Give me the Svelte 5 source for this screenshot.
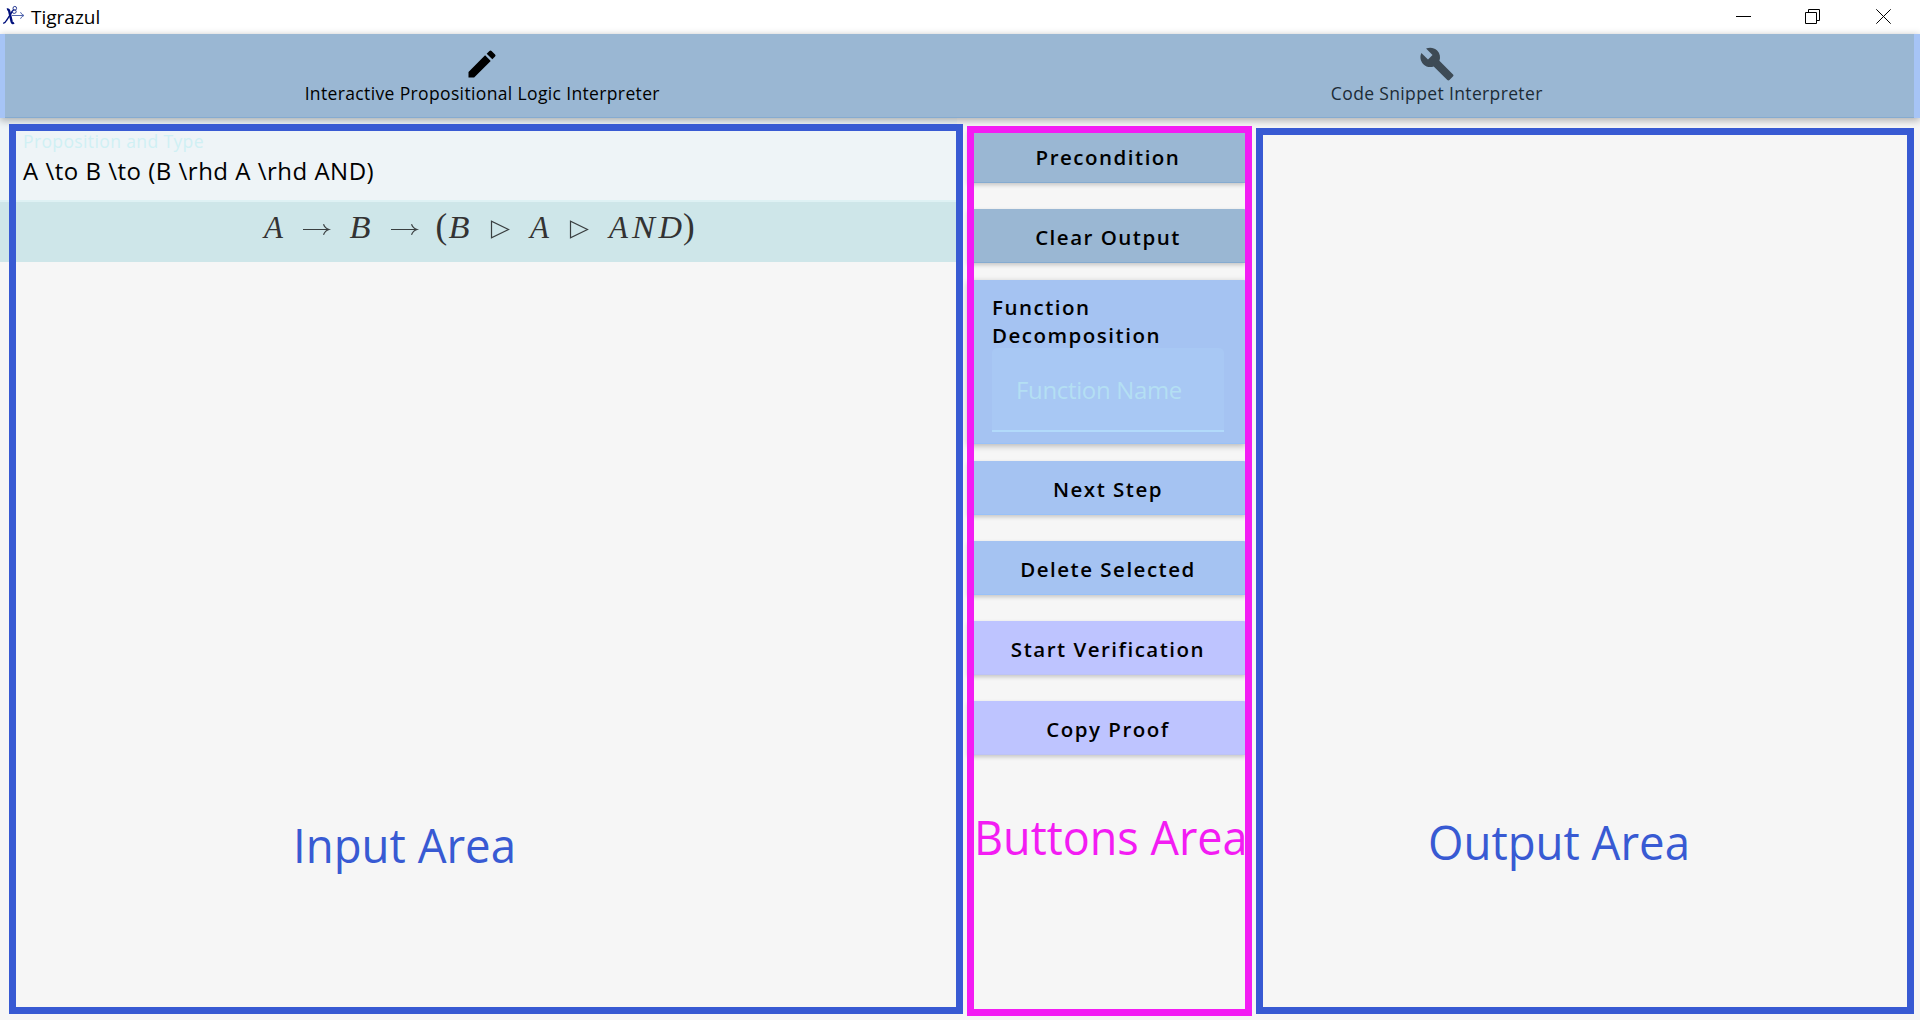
<script>
  const tabs = [
    {
      label: 'Interactive Propositional Logic Interpreter',
      active: true,
      icon: 'M3 17.25V21h3.75L17.81 9.94l-3.75-3.75L3 17.25zM20.71 7.04a1 1 0 0 0 0-1.41l-2.34-2.34a1 1 0 0 0-1.41 0l-1.83 1.83 3.75 3.75 1.83-1.83z',
    },
    {
      label: 'Code Snippet Interpreter',
      active: false,
      icon: 'M22.7 19l-9.1-9.1c.9-2.3.4-5-1.5-6.9-2-2-5-2.4-7.4-1.3L9 6 6 9 1.6 4.7C.4 7.1.9 10.1 2.9 12.1c1.9 1.9 4.6 2.4 6.9 1.5l9.1 9.1c.4.4 1 .4 1.4 0l2.3-2.3c.5-.4.5-1.1.1-1.4z',
    },
  ];
  const outputActions = ['Precondition', 'Clear Output'];
  const stepActions = ['Next Step', 'Delete Selected'];
  const proofActions = ['Start Verification', 'Copy Proof'];
</script>

<div class="window">
  <div class="titlebar">
    <svg class="logo" width="28" height="34" viewBox="0 0 28 34">
      <g class="cross">
        <path class="thick" d="M7 9.5Q8.6 9 9.2 11L11.6 21.5Q12.2 23.8 14 22.8" />
        <path class="thin" d="M14 9.8Q12.6 10 10.8 14L6.4 20.5Q4.8 23.6 3.2 22.8" />
      </g>
      <g class="loops">
        <ellipse cx="14.8" cy="8.3" rx="1.8" ry="1.9" />
        <ellipse cx="14.2" cy="11.6" rx="2" ry="1.8" />
      </g>
      <path class="arrow" d="M12 15.5H23.5M20.5 12.2Q21.5 14.8 24 15.5Q21.5 16.2 20.5 18.8" />
    </svg>
    <span class="title">Tigrazul</span>
    <div class="controls">
      <svg width="16" height="16" viewBox="0 0 16 16"><path d="M0 7.5H15" /></svg>
      <svg width="16" height="16" viewBox="0 0 16 16"><path d="M.5 3.5H11.5V14.5H.5ZM3.5 3.5V.5H14.5V11.5H11.5" /></svg>
      <svg class="close" width="16" height="16" viewBox="0 0 16 16"><path d="M.3 .3L14.7 14.7M14.7 .3L.3 14.7" /></svg>
    </div>
  </div>

  <nav class="tabs">
    {#each tabs as tab}
      <div class="tab" class:active={tab.active}>
        <svg width="36" height="36" viewBox="0 0 24 24"><path d={tab.icon} /></svg>
        <span>{tab.label}</span>
      </div>
    {/each}
  </nav>

  <main class="workspace">
    <section class="input">
      <div class="field">
        <div class="field-label">Proposition and Type</div>
        <div class="field-value">A \to B \to (B \rhd A \rhd AND)</div>
      </div>
      <div class="formula">
        <svg width="440" height="46" viewBox="260 205 440 46">
          <g class="math">
            <text x="264" y="237.5">A</text>
            <text x="349.5" y="237.5" textLength="21" lengthAdjust="spacingAndGlyphs">B</text>
            <text x="448.5" y="237.5" textLength="21" lengthAdjust="spacingAndGlyphs">B</text>
            <text x="530" y="237.5">A</text>
            <text x="609" y="237.5">A</text>
            <text x="632" y="237.5" textLength="23" lengthAdjust="spacingAndGlyphs">N</text>
            <text x="658.5" y="237.5" textLength="23.5" lengthAdjust="spacingAndGlyphs">D</text>
          </g>
          <g class="paren">
            <text x="435.5" y="238">(</text>
            <text x="683" y="238">)</text>
          </g>
          <g class="sym">
            <path d="M303 229.5H328.5M323.5 224.2Q325 228.3 329 229.5Q325 230.7 323.5 234.8" />
            <path d="M391 229.5H416.5M411.5 224.2Q413 228.3 417 229.5Q413 230.7 411.5 234.8" />
            <path d="M491.5 221.3V237.7L508.5 229.5Z" />
            <path d="M570.5 221.3V237.7L587.5 229.5Z" />
          </g>
        </svg>
      </div>
    </section>

    <section class="actions">
      {#each outputActions as label}<div class="button steel">{label}</div>{/each}
      <div class="card">
        <div class="card-title">Function Decomposition</div>
        <div class="name-field">Function Name</div>
      </div>
      {#each stepActions as label}<div class="button sky">{label}</div>{/each}
      {#each proofActions as label}<div class="button lilac">{label}</div>{/each}
    </section>

    <div class="frame frame-input"><span>Input Area</span></div>
    <div class="frame frame-actions"><span>Buttons Area</span></div>
    <div class="frame frame-output"><span>Output Area</span></div>
  </main>
</div>

<style>
  :global(body) {
    margin: 0;
    overflow: hidden;
  }
  .window {
    display: flex;
    flex-direction: column;
    width: 1920px;
    height: 1020px;
    background: #f6f6f6;
    color: #000;
    font-family: 'Open Sans', 'Noto Sans', sans-serif;
    overflow: hidden;
  }
  .window :global(svg) {
    display: block;
  }
  .titlebar {
    display: flex;
    height: 34px;
    background: #fff;
  }
  .logo {
    fill: none;
    stroke: #00107c;
  }
  .logo .thick {
    stroke-width: 2.4;
  }
  .logo .thin {
    stroke-width: 1.4;
  }
  .logo .loops {
    stroke: #2a3c94;
    stroke-width: 1;
  }
  .logo .arrow {
    stroke: #5266ad;
    stroke-width: 1;
  }
  .title {
    margin-left: 3px;
    font-size: 19px;
    line-height: 35px;
  }
  .controls {
    display: flex;
    gap: 53px;
    margin-left: auto;
    padding: 9px 28px 0 0;
  }
  .controls path {
    fill: none;
    stroke: #000;
    stroke-width: 1;
  }
  .controls .close {
    margin-left: 2px;
  }

  .tabs {
    position: relative;
    z-index: 1;
    display: grid;
    grid-template-columns: 1fr 1fr;
    height: 84px;
    padding: 0 6px 0 5px;
    box-sizing: border-box;
    background: #a6c4f6;
    box-shadow: 0 2px 8px rgba(0, 0, 0, 0.32);
  }
  .tab {
    display: flex;
    flex-direction: column;
    align-items: center;
    padding-top: 12px;
    background: #9ab7d3;
    border-bottom: 1px solid #86abd0;
    color: #1c2b36;
  }
  .tab.active {
    color: #000;
  }
  .tab path {
    fill: #3d4a55;
  }
  .tab.active path {
    fill: #000;
  }
  .tab span {
    font-size: 17.5px;
    line-height: 23px;
    letter-spacing: 0.36px;
  }

  .workspace {
    position: relative;
    flex: 1;
    display: grid;
    grid-template-columns: 957px 278px 1fr;
    column-gap: 11px;
  }
  .field {
    box-sizing: border-box;
    height: 84px;
    padding: 11px 23px 0;
    background: #eef4f7;
    border-bottom: 2px solid #def1f4;
  }
  .field-label {
    color: #d0f0f4;
    font-size: 17.5px;
    line-height: 25px;
    letter-spacing: 0.38px;
  }
  .field-value {
    margin-top: 1px;
    font-size: 24px;
    line-height: 32px;
    letter-spacing: 0.5px;
  }
  .formula {
    display: flex;
    justify-content: center;
    box-sizing: border-box;
    height: 60px;
    padding: 3px 0 0 3px;
    background: #cee6e9;
  }
  .math text {
    font-family: 'Liberation Serif', serif;
    font-style: italic;
    font-size: 31px;
    fill: #333;
  }
  .paren text {
    font-family: 'Liberation Serif', serif;
    font-size: 35px;
    fill: #333;
  }
  .sym path {
    fill: none;
    stroke: #3a3f40;
    stroke-width: 1.2;
  }

  .actions {
    padding-top: 11px;
    font-size: 20.5px;
    font-weight: 600;
    letter-spacing: 1.5px;
  }
  .button {
    box-sizing: border-box;
    height: 54px;
    padding-left: 2px;
    line-height: 57px;
    text-align: center;
    border-bottom: 1px solid;
    border-radius: 2px;
    box-shadow: 0 2px 4px rgba(0, 0, 0, 0.2);
  }
  .button + .button {
    margin-top: 26px;
  }
  .steel {
    background: #9ab7d3;
    border-color: #86abd0;
  }
  .sky {
    background: #a5c3f2;
    border-color: #99c1f8;
  }
  .lilac {
    background: #bec4ff;
    border-color: #bcc2f6;
  }
  .card {
    box-sizing: border-box;
    height: 164px;
    margin: 17px 0;
    padding: 13px 22px 0 24px;
    background: #a5c3f2;
    border-bottom: 1px solid #99c1f8;
    border-radius: 2px;
    box-shadow: 0 2px 6px rgba(0, 0, 0, 0.26);
  }
  .card-title {
    height: 55px;
    line-height: 28px;
  }
  .name-field {
    box-sizing: border-box;
    height: 84px;
    padding-left: 24px;
    background: #a8c8f4;
    border-bottom: 2px solid #b2dafa;
    border-radius: 5px 5px 0 0;
    color: #b4dff3;
    font-size: 24px;
    font-weight: 400;
    line-height: 83px;
    letter-spacing: -0.35px;
  }

  /* Coloured outlines laid over the three work areas */
  .frame {
    position: absolute;
    box-sizing: border-box;
    z-index: 2;
    border: 7px solid #385ad3;
    color: #385ad3;
    font-size: 47px;
    line-height: 64px;
    white-space: nowrap;
  }
  .frame span {
    display: inline-block;
    transform: scaleX(0.97);
    transform-origin: left;
  }
  .frame-input {
    top: 6px;
    left: 9px;
    width: 954px;
    height: 890px;
    padding: 682px 0 0 277px;
  }
  .frame-actions {
    top: 8px;
    left: 967px;
    width: 285px;
    height: 890px;
    padding-top: 672px;
    border-color: #f31cf3;
    color: #f31cf3;
  }
  .frame-actions span {
    transform: scaleX(0.957);
  }
  .frame-output {
    top: 10px;
    left: 1256px;
    width: 658px;
    height: 886px;
    padding: 675px 0 0 165px;
  }
</style>
